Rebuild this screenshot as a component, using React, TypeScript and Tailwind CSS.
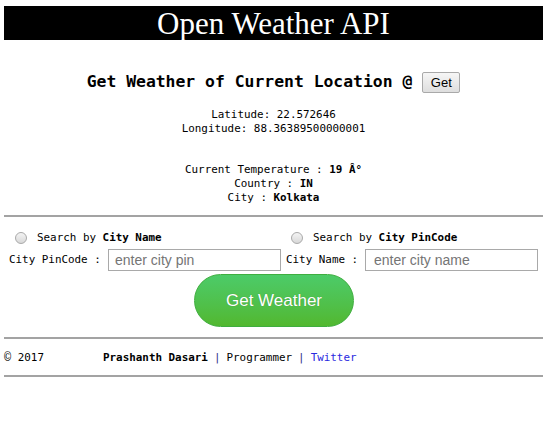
import React from "react";

const mono = { fontFamily: '"DejaVu Sans Mono", "Liberation Mono", monospace' };

function Radio() {
  return (
    <span className="inline-block w-[12px] h-[12px] rounded-full border border-[#a9a9a9] bg-gradient-to-b from-[#f4f4f4] to-[#d8d8d8] shrink-0" />
  );
}

export default function App() {
  return (
    <div className="w-[547px] h-[443px] bg-white px-[4px] pt-[6px] text-black" style={mono}>
      <div className="h-[34px] bg-black flex items-center justify-center">
        <span className="text-white text-[31px] leading-none" style={{ fontFamily: '"Liberation Serif", "Times New Roman", serif' }}>
          Open Weather API
        </span>
      </div>

      <div className="mt-[32px] h-[21px] flex items-center justify-center gap-[10px]">
        <span className="font-bold text-[16.4px] leading-none">Get Weather of Current Location @</span>
        <button className="h-[21px] w-[38px] border border-[#a9a9a9] rounded-[2px] bg-gradient-to-b from-[#f6f6f6] to-[#dedede] text-[13px] leading-none text-black" style={{ fontFamily: '"Liberation Sans", Arial, sans-serif' }}>
          Get
        </button>
      </div>

      <div className="mt-[15px] text-center text-[10.9px] leading-[14px]">
        <div>Latitude: 22.572646</div>
        <div>Longitude: 88.36389500000001</div>
      </div>

      <div className="mt-[27px] text-center text-[10.9px] leading-[14px]">
        <div>Current Temperature : <b>19 Â°</b></div>
        <div>Country : <b>IN</b></div>
        <div>City : <b>Kolkata</b></div>
      </div>

      <div className="mt-[10px] h-[2px] bg-[#a3a3a3]" />

      <div className="mt-[14px] flex text-[10.9px] leading-[14px]">
        <div className="w-[280px] flex items-center pl-[11px]">
          <Radio />
          <span className="ml-[10px]">Search by <b>City Name</b></span>
        </div>
        <div className="flex items-center pl-[7px]">
          <Radio />
          <span className="ml-[10px]">Search by <b>City PinCode</b></span>
        </div>
      </div>

      <div className="mt-[4px] flex items-center text-[10.9px]">
        <span className="ml-[5px] w-[99px]">City PinCode :</span>
        <input
          className="w-[173px] h-[22px] border border-[#a9a9a9] px-[6px] text-[14px] placeholder:text-[#757575] outline-none"
          style={{ fontFamily: '"Liberation Sans", Arial, sans-serif' }}
          placeholder="enter city pin"
        />
        <span className="ml-[5px] w-[79px]">City Name :</span>
        <input
          className="w-[173px] h-[22px] border border-[#a9a9a9] px-[8px] text-[14px] placeholder:text-[#757575] outline-none"
          style={{ fontFamily: '"Liberation Sans", Arial, sans-serif' }}
          placeholder="enter city name"
        />
      </div>

      <div className="mt-[3px] flex justify-center">
        <button
          className="w-[160px] h-[53px] rounded-full border border-[#3fae3f] bg-gradient-to-b from-[#4ccb68] to-[#52b82e] text-white text-[17px] ml-[1px]"
          style={{ fontFamily: '"Liberation Sans", Arial, sans-serif', textShadow: "0 0 1px rgba(0,0,0,0.25)" }}
        >
          Get Weather
        </button>
      </div>

      <div className="mt-[10px] h-[2px] bg-[#a3a3a3]" />

      <div className="mt-[12px] h-[14px] flex items-center text-[10.9px] leading-[14px]">
        <span className="w-[99px] text-black">
          <span style={{ fontFamily: '"Liberation Mono", monospace' }} className="text-[12px]">©</span> 2017
        </span>
        <span className="font-bold">Prashanth Dasari</span>
        <span className="text-[#333388] mx-[6px]">|</span>
        <span>Programmer</span>
        <span className="text-[#333388] mx-[6px]">|</span>
        <span className="text-[#2a2ae0]">Twitter</span>
      </div>

      <div className="mt-[10px] h-[2px] bg-[#a3a3a3]" />
    </div>
  );
}
